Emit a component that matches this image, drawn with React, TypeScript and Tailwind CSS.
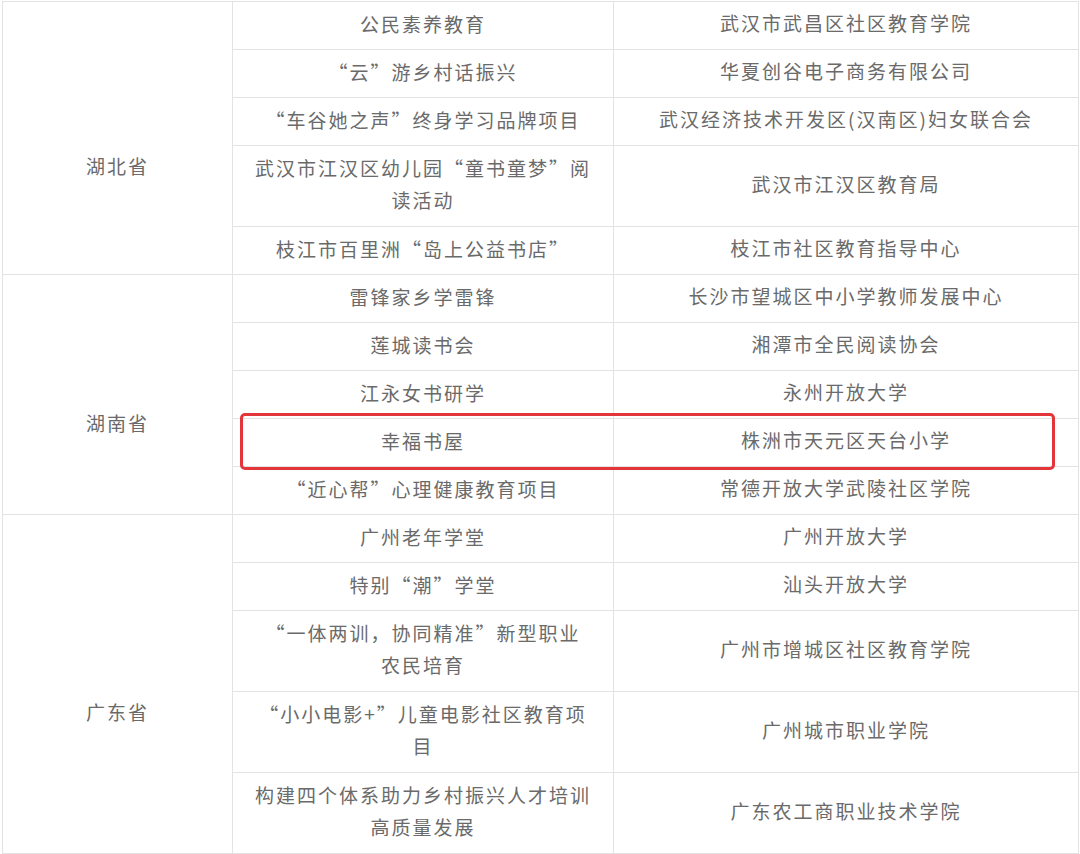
import React from "react";

type Row = { name: React.ReactNode; org: React.ReactNode; tall?: boolean };
type Group = { province: string; rows: Row[] };

const groups: Group[] = [
  {
    province: "湖北省",
    rows: [
      { name: "公民素养教育", org: "武汉市武昌区社区教育学院" },
      { name: "“云”游乡村话振兴", org: "华夏创谷电子商务有限公司" },
      { name: "“车谷她之声”终身学习品牌项目", org: "武汉经济技术开发区(汉南区)妇女联合会" },
      {
        name: (
          <>
            武汉市江汉区幼儿园“童书童梦”阅
            <br />
            读活动
          </>
        ),
        org: "武汉市江汉区教育局",
        tall: true,
      },
      { name: "枝江市百里洲“岛上公益书店”", org: "枝江市社区教育指导中心" },
    ],
  },
  {
    province: "湖南省",
    rows: [
      { name: "雷锋家乡学雷锋", org: "长沙市望城区中小学教师发展中心" },
      { name: "莲城读书会", org: "湘潭市全民阅读协会" },
      { name: "江永女书研学", org: "永州开放大学" },
      { name: "幸福书屋", org: "株洲市天元区天台小学" },
      { name: "“近心帮”心理健康教育项目", org: "常德开放大学武陵社区学院" },
    ],
  },
  {
    province: "广东省",
    rows: [
      { name: "广州老年学堂", org: "广州开放大学" },
      { name: "特别“潮”学堂", org: "汕头开放大学" },
      {
        name: (
          <>
            “一体两训，协同精准”新型职业
            <br />
            农民培育
          </>
        ),
        org: "广州市增城区社区教育学院",
        tall: true,
      },
      {
        name: (
          <>
            “小小电影+”儿童电影社区教育项
            <br />
            目
          </>
        ),
        org: "广州城市职业学院",
        tall: true,
      },
      {
        name: (
          <>
            构建四个体系助力乡村振兴人才培训
            <br />
            高质量发展
          </>
        ),
        org: "广东农工商职业技术学院",
        tall: true,
      },
    ],
  },
];

const cell =
  "border border-[#e3e3e3] text-center align-middle whitespace-nowrap px-0 pt-0 pb-[4px]";

export default function App() {
  return (
    <div
      className="relative w-[1080px] h-[854px] overflow-hidden bg-white text-[#6a6a6a] text-[19px] tracking-[2px]"
      style={{ fontFamily: '"Noto Sans CJK SC", "Noto Sans", sans-serif' }}
    >
      <div className="pt-px pl-[2px]">
        <table className="border-collapse table-fixed w-[1076px]">
          <colgroup>
            <col className="w-[230px]" />
            <col className="w-[381px]" />
            <col className="w-[465px]" />
          </colgroup>
          <tbody>
            {groups.map((g) =>
              g.rows.map((r, i) => (
                <tr key={g.province + i} className={r.tall ? "h-[81px]" : "h-[48px]"}>
                  {i === 0 && (
                    <td
                      rowSpan={g.rows.length}
                      className="border border-[#e3e3e3] text-center align-middle whitespace-nowrap px-0 pb-[4px] pt-[61px]"
                    >
                      {g.province}
                    </td>
                  )}
                  <td className={`${cell} leading-[32px]`}>{r.name}</td>
                  <td className={cell}>{r.org}</td>
                </tr>
              ))
            )}
          </tbody>
        </table>
      </div>
      <div className="absolute left-[240px] top-[413px] w-[815px] h-[57px] border-[3px] border-[#e3363b] rounded-[5px]" />
    </div>
  );
}
